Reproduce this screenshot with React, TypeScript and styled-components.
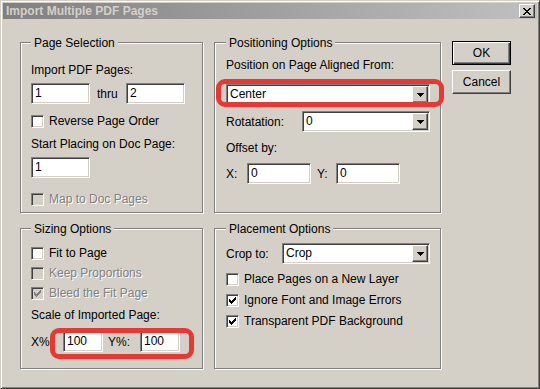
import styled, { createGlobalStyle, css } from 'styled-components';

const GlobalStyle = createGlobalStyle`
  html, body {
    margin: 0;
    padding: 0;
    background: #d4d0c8;
  }
  body {
    font-family: "Liberation Sans", Arial, sans-serif;
    font-size: 12px;
    color: #000;
  }
`;

const sunken = css`
  box-sizing: border-box;
  border: 1px solid;
  border-color: #808080 #fff #fff #808080;
  box-shadow: inset 1px 1px 0 #404040, inset -1px -1px 0 #d4d0c8;
`;

const raised = css`
  box-sizing: border-box;
  background: #d4d0c8;
  border: 1px solid;
  border-color: #fff #404040 #404040 #fff;
  box-shadow: inset -1px -1px 0 #808080;
`;

const Window = styled.div`
  box-sizing: border-box;
  width: 540px;
  height: 389px;
  padding: 2px;
  background: #d4d0c8;
  border: 1px solid;
  border-color: #d4d0c8 #404040 #404040 #d4d0c8;
  box-shadow: inset 1px 1px 0 #fff, inset -1px -1px 0 #808080;
`;

const TitleBar = styled.div`
  height: 16px;
  display: flex;
  align-items: center;
  justify-content: space-between;
  padding: 0 2px 0 3px;
  background: linear-gradient(to right, #808080, #c0c0c0);
  color: #d4d0c8;
  font-weight: bold;
  line-height: 14px;
`;

const CloseButton = styled.div`
  ${raised};
  width: 16px;
  height: 14px;
  display: flex;
  align-items: center;
  justify-content: center;
`;

const Body = styled.div`
  display: grid;
  grid-template-columns: 183px 227px 59px;
  grid-template-rows: 171px 141px;
  column-gap: 11px;
  row-gap: 15px;
  padding: 23px 0 0 17px;
`;

const Group = styled.div<{ $wide?: boolean }>`
  box-sizing: border-box;
  display: flex;
  flex-direction: column;
  border: 1px solid #808080;
  box-shadow: inset 1px 1px 0 #fff, 1px 1px 0 #fff;
  padding: 0 10px 0 ${(p) => (p.$wide ? 11 : 10)}px;
`;

const Caption = styled.span`
  align-self: flex-start;
  margin-top: -7px;
  padding: 0 3px;
  line-height: 14px;
  background: #d4d0c8;
`;

const Text = styled.div<{ $mt?: number; $disabled?: boolean }>`
  margin-top: ${(p) => p.$mt ?? 0}px;
  line-height: 14px;
  white-space: nowrap;
  ${(p) =>
    p.$disabled &&
    css`
      color: #808080;
      text-shadow: 1px 1px 0 #fff;
    `}
`;

const Row = styled.div<{ $mt?: number; $spread?: boolean }>`
  display: flex;
  align-items: center;
  margin-top: ${(p) => p.$mt ?? 0}px;
  justify-content: ${(p) => (p.$spread ? 'space-between' : 'flex-start')};
`;

const Tag = styled.span<{ $w?: number; $ml?: number }>`
  flex: none;
  width: ${(p) => (p.$w ? `${p.$w}px` : 'auto')};
  margin-left: ${(p) => p.$ml ?? 0}px;
  line-height: 14px;
  white-space: nowrap;
`;

const TextBox = styled.div<{ $w: number; $mt?: number }>`
  ${sunken};
  flex: none;
  width: ${(p) => p.$w}px;
  height: 21px;
  margin-top: ${(p) => p.$mt ?? 0}px;
  padding: 0 3px;
  line-height: 19px;
  background: #fff;
`;

const SelectBox = styled.div<{ $w?: number }>`
  ${sunken};
  flex: none;
  display: flex;
  align-items: stretch;
  width: ${(p) => (p.$w ? `${p.$w}px` : '100%')};
  height: 21px;
  padding: 1px;
  background: #fff;
`;

const SelectValue = styled.span`
  flex: 1;
  padding-left: 2px;
  line-height: 17px;
`;

const DropButton = styled.span`
  ${raised};
  width: 16px;
  display: flex;
  align-items: center;
  justify-content: center;
`;

const CheckRow = styled.div<{ $mt?: number; $disabled?: boolean }>`
  display: flex;
  align-items: center;
  gap: 5px;
  height: 13px;
  margin-top: ${(p) => p.$mt ?? 0}px;
  line-height: 13px;
  white-space: nowrap;
  ${(p) =>
    p.$disabled &&
    css`
      color: #808080;
      text-shadow: 1px 1px 0 #fff;
    `}
`;

const CheckBox = styled.span<{ $disabled?: boolean }>`
  ${sunken};
  flex: none;
  width: 13px;
  height: 13px;
  display: flex;
  align-items: center;
  justify-content: center;
  background: ${(p) => (p.$disabled ? '#d4d0c8' : '#fff')};
`;

const ButtonColumn = styled.div`
  display: flex;
  flex-direction: column;
  gap: 5px;
  margin-top: -1px;
`;

const PushButton = styled.div<{ $default?: boolean }>`
  box-sizing: border-box;
  height: 24px;
  display: flex;
  align-items: center;
  justify-content: center;
  background: #d4d0c8;
  ${(p) =>
    p.$default
      ? css`
          border: 1px solid #000;
          box-shadow: inset 1px 1px 0 #fff, inset -1px -1px 0 #404040,
            inset -2px -2px 0 #808080;
        `
      : css`
          border: 1px solid;
          border-color: #fff #404040 #404040 #fff;
          box-shadow: inset -1px -1px 0 #808080;
        `}
`;

const Highlight = styled.div<{
  $t: number;
  $r: number;
  $b: number;
  $l: number;
  $mt?: number;
}>`
  position: relative;
  display: flex;
  align-items: center;
  margin-top: ${(p) => p.$mt ?? 0}px;
  &::after {
    content: '';
    position: absolute;
    top: ${(p) => -p.$t}px;
    right: ${(p) => -p.$r}px;
    bottom: ${(p) => -p.$b}px;
    left: ${(p) => -p.$l}px;
    border: 5px solid #e53935;
    border-radius: 9px;
    pointer-events: none;
  }
`;

const CHECK =
  'M6 0h1v1h-1z M5 1h2v1h-2z M0 2h1v1h-1z M4 2h3v1h-3z M0 3h2v1h-2z M3 3h3v1h-3z M0 4h5v1h-5z M1 5h3v1h-3z M2 6h1v1h-1z';

const Check = ({ color = '#000' }: { color?: string }) => (
  <svg width="7" height="7" viewBox="0 0 7 7" shapeRendering="crispEdges">
    <path fill={color} d={CHECK} />
  </svg>
);

const Arrow = () => (
  <svg width="7" height="4" viewBox="0 0 7 4" shapeRendering="crispEdges">
    <path fill="#000" d="M0 0h7v1h-7z M1 1h5v1h-5z M2 2h3v1h-3z M3 3h1v1h-1z" />
  </svg>
);

const CloseGlyph = () => (
  <svg width="8" height="7" viewBox="0 0 8 7" shapeRendering="crispEdges">
    <path
      fill="#000"
      d="M0 0h2v1h-2z M6 0h2v1h-2z M1 1h2v1h-2z M5 1h2v1h-2z M2 2h4v1h-4z M3 3h2v1h-2z M2 4h4v1h-4z M1 5h2v1h-2z M5 5h2v1h-2z M0 6h2v1h-2z M6 6h2v1h-2z"
    />
  </svg>
);

const Select = ({ value, w }: { value: string; w?: number }) => (
  <SelectBox $w={w}>
    <SelectValue>{value}</SelectValue>
    <DropButton>
      <Arrow />
    </DropButton>
  </SelectBox>
);

const Option = ({
  label,
  checked,
  disabled,
  mt,
}: {
  label: string;
  checked?: boolean;
  disabled?: boolean;
  mt?: number;
}) => (
  <CheckRow $mt={mt} $disabled={disabled}>
    <CheckBox $disabled={disabled}>
      {checked ? <Check color={disabled ? '#808080' : '#000'} /> : null}
    </CheckBox>
    {label}
  </CheckRow>
);

export default function App() {
  return (
    <>
      <GlobalStyle />
      <Window>
        <TitleBar>
          <span>Import Multiple PDF Pages</span>
          <CloseButton>
            <CloseGlyph />
          </CloseButton>
        </TitleBar>
        <Body>
          <Group>
            <Caption>Page Selection</Caption>
            <Text $mt={13}>Import PDF Pages:</Text>
            <Row $mt={6}>
              <TextBox $w={59}>1</TextBox>
              <Tag $w={29} $ml={7}>
                thru
              </Tag>
              <TextBox $w={59}>2</TextBox>
            </Row>
            <Option mt={11} label="Reverse Page Order" />
            <Text $mt={9}>Start Placing on Doc Page:</Text>
            <TextBox $w={59} $mt={6}>
              1
            </TextBox>
            <Option mt={15} label="Map to Doc Pages" disabled />
          </Group>

          <Group $wide>
            <Caption>Positioning Options</Caption>
            <Text $mt={8}>Position on Page Aligned From:</Text>
            <Highlight $mt={12} $t={5} $r={14} $b={2} $l={10}>
              <Select value="Center" />
            </Highlight>
            <Row $mt={6} $spread>
              <Tag>Rotatation:</Tag>
              <Select value="0" w={128} />
            </Row>
            <Text $mt={9}>Offset by:</Text>
            <Row $mt={8}>
              <Tag $w={21}>X:</Tag>
              <TextBox $w={64}>0</TextBox>
              <Tag $w={19} $ml={6}>
                Y:
              </Tag>
              <TextBox $w={64}>0</TextBox>
            </Row>
          </Group>

          <ButtonColumn>
            <PushButton $default>OK</PushButton>
            <PushButton>Cancel</PushButton>
          </ButtonColumn>

          <Group>
            <Caption>Sizing Options</Caption>
            <Option mt={11} label="Fit to Page" />
            <Option mt={7} label="Keep Proportions" disabled />
            <Option mt={7} label="Bleed the Fit Page" checked disabled />
            <Text $mt={8}>Scale of Imported Page:</Text>
            <Row $mt={9}>
              <Tag $w={32}>X%</Tag>
              <Highlight $t={3} $r={14} $b={7} $l={13}>
                <TextBox $w={40}>100</TextBox>
                <Tag $w={32} $ml={5}>
                  Y%:
                </Tag>
                <TextBox $w={40}>100</TextBox>
              </Highlight>
            </Row>
          </Group>

          <Group $wide>
            <Caption>Placement Options</Caption>
            <Row $mt={7} $spread>
              <Tag>Crop to:</Tag>
              <Select value="Crop" w={148} />
            </Row>
            <Option mt={9} label="Place Pages on a New Layer" />
            <Option mt={8} label="Ignore Font and Image Errors" checked />
            <Option mt={8} label="Transparent PDF Background" checked />
          </Group>
        </Body>
      </Window>
    </>
  );
}
